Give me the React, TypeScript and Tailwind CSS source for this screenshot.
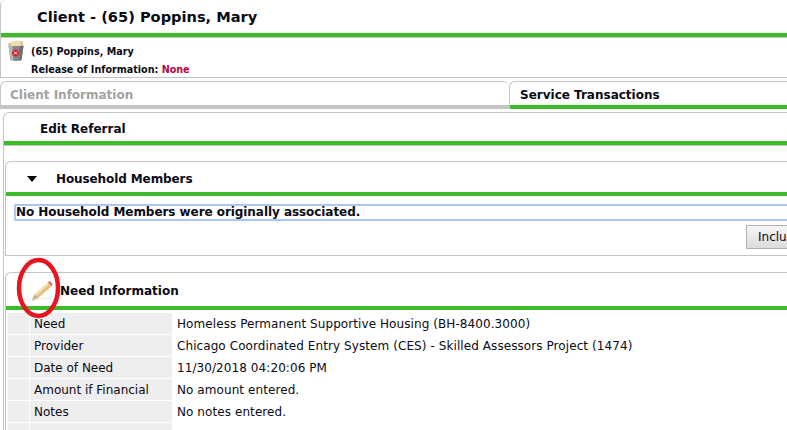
const font = "font-['DejaVu_Sans','Liberation_Sans',sans-serif]";

const needRows = [
  { label: "Need", value: "Homeless Permanent Supportive Housing (BH-8400.3000)" },
  { label: "Provider", value: "Chicago Coordinated Entry System (CES) - Skilled Assessors Project (1474)" },
  { label: "Date of Need", value: "11/30/2018 04:20:06 PM" },
  { label: "Amount if Financial", value: "No amount entered." },
  { label: "Notes", value: "No notes entered." },
];

function TrashIcon() {
  return (
    <svg width="16" height="22" viewBox="0 0 16 22" className="shrink-0">
      <path d="M0.5 3 L14 1 L15.5 6 L0.5 6 Z" fill="#cdb98a" />
      <path d="M2.5 2 L8 0.5 L13 2 L13 6 L2.5 6 Z" fill="#ecdcae" />
      <path d="M0.5 6 H15.5 L13.5 20 Q8 22 2.5 20 Z" fill="#85878a" />
      <path d="M0.5 6 H4.5 L5.5 21 L2.5 20 Z" fill="#b4b6b9" />
      <path d="M11.5 6 H15.5 L13.5 20 L11.5 21 Z" fill="#6f7174" />
      <circle cx="7.5" cy="13" r="3.5" fill="#d3242c" />
      <path d="M6 11.5 L9 14.5 M9 11.5 L6 14.5" stroke="#fff" strokeWidth="1" />
    </svg>
  );
}

function PencilIcon() {
  return (
    <svg width="22" height="22" viewBox="0 0 22 22" className="shrink-0">
      <path d="M1 21.5 Q10 18.5 20 19.5" stroke="#ececec" strokeWidth="1.5" fill="none" />
      <path d="M1 21 L3.5 15.5 L17 3.5 L21 7 L7 19 Z" fill="#e6c07e" />
      <path d="M3.5 15.5 L17 3.5 L18.5 5 L5 17 Z" fill="#f6e2b0" />
      <path d="M1 21 L3.5 15.5 L7 19 Z" fill="#cdb08a" />
      <path d="M17 3.5 L18.5 2 L21.5 5 L21 7 Z" fill="#c9646c" />
    </svg>
  );
}

export default function App() {
  return (
    <div className={`${font} relative h-[430px] w-[787px] overflow-hidden bg-white text-[12px] text-[#0a0a14]`}>
      {/* page header */}
      <div className="h-[38px] w-full rounded-tl-[6px] border-b border-l border-[#c4c4c4]">
        <div className="flex h-[33px] items-center pt-[1px] pl-[36px] text-[14.6px] leading-none font-bold">Client - (65) Poppins, Mary</div>
        <div className="h-1 bg-[#3cbc2a]" />
      </div>

      {/* client summary */}
      <div className="flex h-10 gap-[7px] border-b border-l border-[#c4c4c4] pt-[2px] pl-[7px]">
        <TrashIcon />
        <div className="pt-[3px] text-[9.6px] leading-[18px] font-bold">
          <div>(65) Poppins, Mary</div>
          <div>
            Release of Information: <span className="text-[#c0003c]">None</span>
          </div>
        </div>
      </div>

      {/* tabs */}
      <div className="mt-[3px] flex h-7 text-[12px] leading-none font-bold">
        <div className="flex w-[509px] flex-col rounded-tl-[6px] rounded-tr-[6px] border-t border-l border-[#c4c4c4]">
          <div className="flex flex-1 items-center pt-[2px] pl-[9px] text-[#a2a2a2]">Client Information</div>
          <div className="h-1 bg-[#c4c4c4]" />
        </div>
        <div className="flex flex-1 flex-col rounded-tl-[6px] border-t border-l border-[#c4c4c4]">
          <div className="flex flex-1 items-center pt-[2px] pl-[10px]">Service Transactions</div>
          <div className="h-1 bg-[#3cbc2a]" />
        </div>
      </div>

      {/* edit referral panel */}
      <div className="mt-[3px] ml-[3px] h-[400px] rounded-tl-[6px] border-t border-l border-[#c4c4c4]">
        <div className="flex h-7 items-center pt-[3px] pl-[36px] text-[12px] font-bold">Edit Referral</div>
        <div className="h-1 bg-[#3cbc2a]" />
        <div className="h-px bg-[#c4c4c4]" />

        {/* household members */}
        <div className="mt-[15px] ml-[1px] h-[95px] rounded-tl-[6px] border-y border-l border-[#c4c4c4]">
          <div className="flex h-[30px] items-center pt-[3px] text-[12px] font-bold">
            <span className="ml-[21px] h-0 w-0 border-x-[5px] border-t-[6px] border-x-transparent border-t-black" />
            <span className="ml-[19px] tracking-[-0.1px]">Household Members</span>
          </div>
          <div className="h-1 bg-[#3cbc2a]" />
          <div className="mt-2 ml-[8px] flex h-[17px] items-center rounded-l-[2px] border-y-2 border-l-2 border-[#a9c7f5] pb-px text-[12px] font-bold tracking-[-0.06px]">
            No Household Members were originally associated.
          </div>
          <div className="mt-[4px] flex justify-end overflow-hidden">
            <button className="-mr-[30px] h-[24px] w-[71px] rounded-[1px] border border-[#b0b0b0] border-r-0 bg-gradient-to-b from-[#f6f6f6] to-[#dcdcdc] pl-[11px] text-left text-[12px] leading-none">
              Include
            </button>
          </div>
        </div>

        {/* need information */}
        <div className="mt-[16px] ml-[1px] rounded-tl-[6px] border-t border-l border-[#c4c4c4]">
          <div className="flex h-[33px] items-center gap-[2px] pl-[25px] text-[12px] font-bold">
            <PencilIcon />
            <span className="ml-[5px] pt-[2px]">Need Information</span>
          </div>
          <div className="h-1 bg-[#3cbc2a]" />
          <div className="mt-[3px] grid grid-cols-[21px_143px_1fr] gap-y-px pl-[2px] text-[12px] leading-[21px]">
            {needRows.map((row) => (
              <div key={row.label} className="contents">
                <div className="h-[21px] bg-[#eeeeee]" />
                <div className="ml-px h-[21px] bg-[#eeeeee] pt-px pl-[4px] whitespace-nowrap">{row.label}</div>
                <div className="h-[21px] pt-px pl-[5px] tracking-[0.08px] whitespace-nowrap">{row.value}</div>
              </div>
            ))}
            <div className="h-[21px] bg-[#eeeeee]" />
            <div className="ml-px h-[21px] bg-[#eeeeee]" />
          </div>
        </div>
      </div>

      {/* red annotation drawn over the screenshot */}
      <svg width="48" height="64" viewBox="0 0 48 64" className="absolute top-[257px] left-[16px]">
        <ellipse cx="22.5" cy="31" rx="19.5" ry="28" fill="none" stroke="#e8141e" strokeWidth="4.5" />
      </svg>
    </div>
  );
}
